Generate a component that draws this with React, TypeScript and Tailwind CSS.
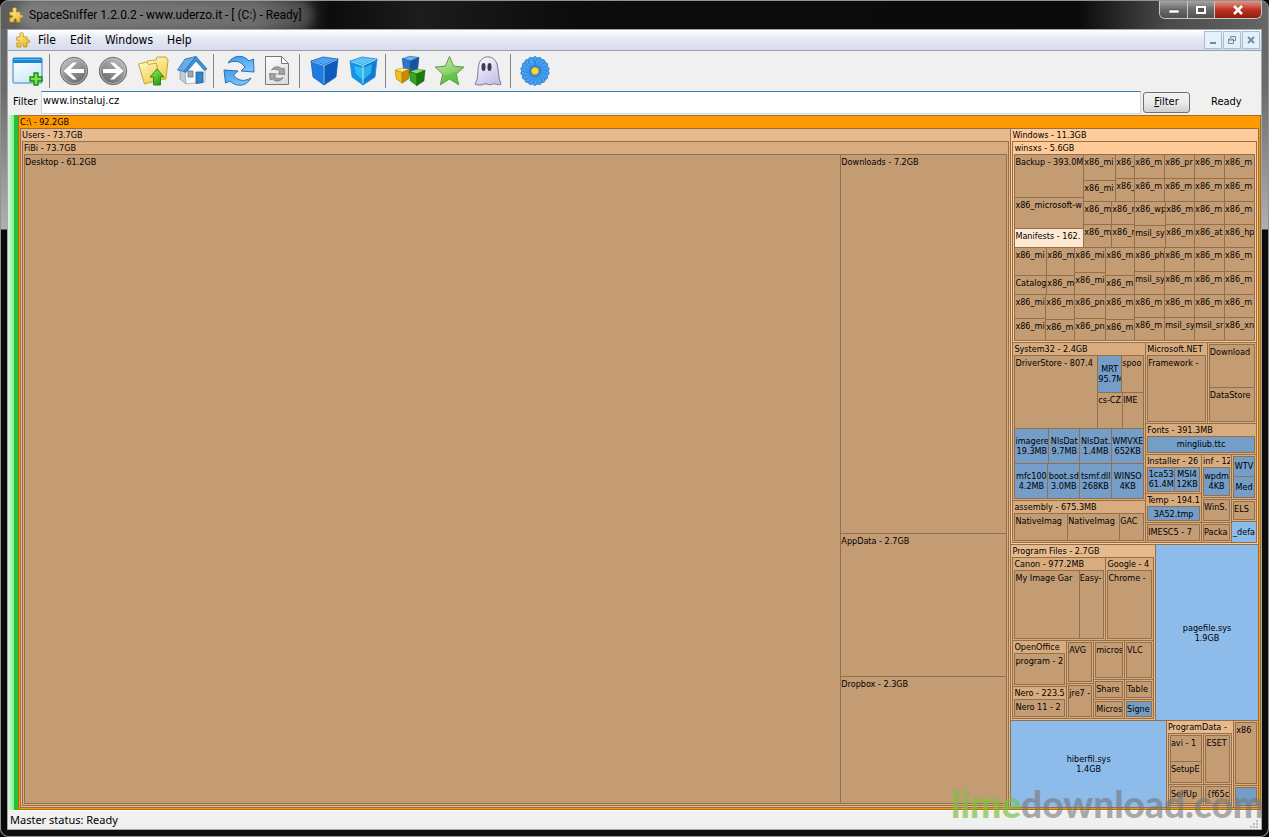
import type { ReactNode } from 'react';
import clsx from 'clsx';

/* ---------- treemap data ---------- */

type Tile =
  | { kind: 'row' | 'col'; weight: number; items: Tile[] }
  | { kind: 'folder'; weight: number; name?: string; tone: string; body: Tile }
  | { kind: 'leaf'; weight: number; name: string; tone: string }
  | { kind: 'file'; weight: number; name: string; size?: string; tone: string };

const TAN = 'bg-[#c49c74]';
const SAND = 'bg-[#d8ac7e]';
const PEACH = 'bg-[#e7ba8e]';
const LIGHT = 'bg-[#ffcc99]';
const CREAM = 'bg-[#ffe8d2]';
const BLUE = 'bg-[#749dc7]';
const SKY = 'bg-[#8dbbea]';

const row = (weight: number, ...items: Tile[]): Tile => ({ kind: 'row', weight, items });
const col = (weight: number, ...items: Tile[]): Tile => ({ kind: 'col', weight, items });
const leaf = (weight: number, name: string, tone = TAN): Tile => ({ kind: 'leaf', weight, name, tone });
const file = (weight: number, name: string, size?: string, tone = BLUE): Tile => ({ kind: 'file', weight, name, size, tone });
const folder = (weight: number, name: string, tone: string, body: Tile): Tile => ({ kind: 'folder', weight, name, tone, body });
const ring = (weight: number, body: Tile, tone = SAND): Tile => ({ kind: 'folder', weight, tone, body });
const small = (weight: number, name: string) => ring(weight, leaf(1, name));
const pair = (weight: number, a: string, b: string, top = 23, bottom = 22) => col(weight, leaf(top, a), leaf(bottom, b));

const winsxs = folder(
  199,
  'winsxs - 5.6GB',
  LIGHT,
  col(
    1,
    row(
      92,
      col(68, leaf(42, 'Backup - 393.0M'), leaf(30, 'x86_microsoft-w'), leaf(18, 'Manifests - 162.', CREAM)),
      col(
        170,
        row(
          46,
          pair(31, 'x86_mi', 'x86_mi', 25, 20),
          pair(18, 'x86_', 'x86_'),
          pair(29, 'x86_m', 'x86_m'),
          pair(29, 'x86_pr', 'x86_m'),
          pair(29, 'x86_m', 'x86_m'),
          pair(29, 'x86_m', 'x86_m'),
        ),
        row(
          45,
          pair(27, 'x86_m', 'x86_m', 22, 22),
          pair(22, 'x86_m', 'x86_m', 22, 22),
          pair(30, 'x86_wp', 'msil_sy', 23, 21),
          pair(28, 'x86_m', 'x86_m', 22, 22),
          pair(29, 'x86_m', 'x86_at', 22, 22),
          pair(29, 'x86_m', 'x86_hp', 22, 22),
        ),
      ),
    ),
    row(
      46,
      pair(31, 'x86_mi', 'Catalog', 27, 18),
      pair(27, 'x86_m', 'x86_m', 27, 18),
      pair(30, 'x86_mi', 'x86_mi', 24, 21),
      pair(28, 'x86_m', 'x86_m', 27, 18),
      pair(29, 'x86_ph', 'msil_sy'),
      pair(29, 'x86_m', 'x86_m'),
      pair(29, 'x86_m', 'x86_m'),
      pair(29, 'x86_m', 'x86_m'),
    ),
    row(
      45,
      pair(30, 'x86_mi', 'x86_mi', 23, 21),
      pair(28, 'x86_m', 'x86_m', 24, 20),
      pair(30, 'x86_pn', 'x86_pn', 23, 21),
      pair(28, 'x86_m', 'x86_m', 24, 20),
      pair(29, 'x86_m', 'x86_m', 22, 22),
      pair(29, 'x86_m', 'msil_sy', 22, 22),
      pair(29, 'x86_m', 'msil_sr', 22, 22),
      pair(29, 'x86_m', 'x86_xn', 22, 22),
    ),
  ),
);

const system32 = folder(
  157,
  'System32 - 2.4GB',
  SAND,
  col(
    1,
    row(
      72,
      leaf(82, 'DriverStore - 807.4'),
      col(45, row(36, file(23, 'MRT', '95.7M'), leaf(21, 'spoo')), row(35, leaf(24, 'cs-CZ'), leaf(20, 'IME'))),
    ),
    row(34, file(33, 'imagere', '19.3MB'), file(30, 'NlsDat', '9.7MB'), file(31, 'NlsDat.', '1.4MB'), file(31, 'WMVXE', '652KB')),
    row(34, file(32, 'mfc100', '4.2MB'), file(31, 'boot.sd', '3.0MB'), file(31, 'tsmf.dll', '268KB'), file(31, 'WINSO', '4KB')),
  ),
);

const windows = folder(
  415,
  'Windows - 11.3GB',
  LIGHT,
  col(
    1,
    winsxs,
    row(
      199,
      col(132, system32, folder(41, 'assembly - 675.3MB', SAND, row(1, leaf(52, 'NativeImag'), leaf(51, 'NativeImag'), leaf(23, 'GAC')))),
      col(
        110,
        row(80, folder(61, 'Microsoft.NET', SAND, leaf(1, 'Framework - ')), ring(48, col(1, leaf(42, 'Download'), leaf(33, 'DataStore')))),
        folder(29, 'Fonts - 391.3MB', SAND, file(1, 'mingliub.ttc')),
        row(
          88,
          col(
            55,
            folder(39, 'Installer - 26', SAND, row(1, file(26, '1ca53', '61.4M'), file(24, 'MSI4', '12KB'))),
            folder(29, 'Temp - 194.1', SAND, file(1, '3A52.tmp')),
            small(18, 'IMESC5 - 7'),
          ),
          col(29, folder(44, 'inf - 12', SAND, file(1, 'wpdm', '4KB')), small(23, 'WinS.'), small(19, 'Packa')),
          col(24, ring(44, col(1, file(20, 'WTV'), file(20, 'Med'))), small(21, 'ELS'), file(21, '_defa', undefined, SKY)),
        ),
      ),
    ),
  ),
);

const programFiles = folder(
  143,
  'Program Files - 2.7GB',
  PEACH,
  col(
    1,
    row(
      82,
      folder(93, 'Canon - 977.2MB', SAND, row(1, leaf(64, 'My Image Gar'), leaf(24, 'Easy-'))),
      folder(46, 'Google - 4', SAND, leaf(1, 'Chrome - ')),
    ),
    row(
      77,
      col(53, folder(45, 'OpenOffice', SAND, leaf(1, 'program - 2')), folder(31, 'Nero - 223.5', SAND, leaf(1, 'Nero 11 - 2'))),
      col(26, small(42, 'AVG'), small(34, 'jre7 - ')),
      col(30, small(39, 'micros'), small(18, 'Share'), small(18, 'Micros')),
      col(28, small(39, 'VLC'), small(18, 'Table'), ring(18, leaf(1, 'Signe', BLUE))),
    ),
  ),
);

const programData = folder(
  65,
  'ProgramData - ',
  PEACH,
  col(
    1,
    row(50, ring(34, col(1, leaf(25, 'avi - 1'), leaf(20, 'SetupE'))), small(26, 'ESET')),
    row(20, small(34, 'SelfUp'), small(26, '{f65c')),
  ),
);

const drive = folder(
  1,
  'C:\\ - 92.2GB',
  'bg-[#ff9900]',
  row(
    1,
    folder(
      989,
      'Users - 73.7GB',
      PEACH,
      folder(
        1,
        'FiBi - 73.7GB',
        SAND,
        row(
          1,
          leaf(815, 'Desktop - 61.2GB'),
          col(165, leaf(379, 'Downloads - 7.2GB'), leaf(141, 'AppData - 2.7GB'), leaf(126, 'Dropbox - 2.3GB')),
        ),
      ),
    ),
    col(
      247,
      windows,
      row(175, programFiles, file(103, 'pagefile.sys', '1.9GB', SKY)),
      row(86, file(156, 'hiberfil.sys', '1.4GB', SKY), programData, col(24, small(65, 'x86'), ring(20, file(1, '')))),
    ),
  ),
);

function TileView({ tile }: { tile: Tile }) {
  const grow = { flexGrow: tile.weight };
  const base = 'min-h-0 min-w-0 basis-0 overflow-hidden';

  if (tile.kind === 'row' || tile.kind === 'col') {
    return (
      <div className={clsx(base, 'flex gap-px', tile.kind === 'col' && 'flex-col')} style={grow}>
        {tile.items.map((item, index) => (
          <TileView key={index} tile={item} />
        ))}
      </div>
    );
  }
  if (tile.kind === 'folder') {
    return (
      <div className={clsx(base, 'flex flex-col px-px pb-px', !tile.name && 'pt-px', tile.tone)} style={grow}>
        {tile.name && <div className="h-3 shrink-0 overflow-hidden whitespace-pre">{tile.name}</div>}
        <div className="flex min-h-0 grow basis-0 bg-[#94704a] p-px">
          <TileView tile={tile.body} />
        </div>
      </div>
    );
  }
  if (tile.kind === 'file') {
    return (
      <div className={clsx(base, 'flex flex-col justify-center text-center leading-[10px] whitespace-pre', tile.tone)} style={grow}>
        <div className="overflow-hidden">{tile.name}</div>
        {tile.size && <div className="overflow-hidden">{tile.size}</div>}
      </div>
    );
  }
  return (
    <div className={clsx(base, 'pt-px whitespace-pre', tile.tone)} style={grow}>
      {tile.name}
    </div>
  );
}

/* ---------- icons ---------- */

function Icon({ children }: { children: ReactNode }) {
  return (
    <svg width="32" height="32" viewBox="0 0 32 32" aria-hidden="true">
      {children}
    </svg>
  );
}

function Gradients() {
  const stops: [string, string, string][] = [
    ['gArrows', '#3f9bea', '#7cc3fa'],
    ['gGray', '#c9c9c9', '#6d6d6d'],
    ['gYellow', '#fff6a0', '#e9b91e'],
    ['gFolder', '#fffad0', '#f3cf4a'],
    ['gGreen', '#a5ee58', '#2c9c14'],
    ['gGhost', '#ffffff', '#c5c2e6'],
    ['gStar', '#c8efac', '#6cbf4c'],
    ['gPage', '#ffffff', '#dcdcdc'],
    ['gWin', '#ffffff', '#cde9f8'],
  ];
  return (
    <svg width="0" height="0" className="absolute" aria-hidden="true">
      <defs>
        {stops.map(([id, from, to]) => (
          <linearGradient key={id} id={id} x1="0" y1="0" x2="0.6" y2="1">
            <stop offset="0" stopColor={from} />
            <stop offset="1" stopColor={to} />
          </linearGradient>
        ))}
      </defs>
    </svg>
  );
}

function PuzzleIcon() {
  return (
    <svg width="16" height="16" viewBox="0 0 16 16" aria-hidden="true">
      <path
        d="M5 5V3.200C4 1.800 5 .7 6.500.7S9 1.800 8.200 3.200V5H12v3h1.600c1.500 0 1.700 2.600 0 2.600H12V15H8.600v-2.200c0-1.500-2.600-1.500-2.600 0V15H1.800v-4.200h1.600c1.600-.3 1.600-2.300 0-2.500H1.800V5z"
        fill="url(#gYellow)"
        stroke="#c08a10"
        strokeWidth=".8"
      />
    </svg>
  );
}

const NewViewIcon = () => (
  <Icon>
    <rect x="1" y="3" width="29" height="25" rx="1" fill="url(#gWin)" stroke="#2f86c4" />
    <path d="M1 3h29v5H1z" fill="#1686d8" />
    <path d="M2 4h27v1H2z" fill="#62b7f2" />
    <path d="M22 18h4v4h4v4h-4v4h-4v-4h-4v-4h4z" fill="#7be34a" stroke="#168a12" strokeWidth="1.300" />
  </Icon>
);

const ArrowIcon = ({ flip }: { flip?: boolean }) => (
  <Icon>
    <g transform={flip ? 'matrix(-1 0 0 1 31 0)' : 'translate(-1 0)'}>
      <circle cx="16" cy="16" r="13.700" fill="url(#gGray)" stroke="#707070" />
      <circle cx="16" cy="16" r="12.500" fill="none" stroke="#bdbdbd" strokeWidth=".8" />
      <path d="M5.500 16L15 7.500h4L12.500 14H26v4H12.500l6.500 6.500h-4z" fill="#fff" />
    </g>
  </Icon>
);

const FolderUpIcon = () => (
  <Icon>
    <path d="M10 6l9-1 1-3h9l2 3-2 19-15 2z" fill="url(#gFolder)" stroke="#cba534" />
    <path d="M1.500 9l8-2 2 2.500 8-1.500 3 17-15 4z" fill="url(#gFolder)" stroke="#cba534" />
    <path d="M20 14l7 8h-3.500v8h-7v-8H13z" fill="url(#gGreen)" stroke="#2b8c15" />
  </Icon>
);

const HomeIcon = () => (
  <Icon>
    <path d="M4 14l6 2v13l-6-5z" fill="#c3cdd8" stroke="#8c9cac" strokeWidth=".8" />
    <path d="M9 15l11-10 9 10v12l-19 2z" fill="#f6f8fa" stroke="#9aa9b8" strokeWidth=".8" />
    <path d="M20 17h7v10.500l-7 1z" fill="#3784cc" stroke="#1a5b9c" strokeWidth=".8" />
    <path d="M12 16h5v6h-5z" fill="#9aaabb" stroke="#62768a" strokeWidth=".8" />
    <path d="M1.500 15L9 4l11-2.500L8 16.500z" fill="#64ade8" stroke="#2a6fb0" strokeWidth=".8" />
    <path d="M8 16.500L20 1.500l11 12.500-2.500 1.500L20 6 10 17.500z" fill="#3f8fd4" stroke="#2a6fb0" strokeWidth=".8" />
  </Icon>
);

const RefreshShape = ({ fill, stroke }: { fill: string; stroke: string }) => (
  <g fill={fill} stroke={stroke} strokeLinejoin="round">
    <path d="M5 8C10 0 20-1 26 6l4.500-2 .5 13-13-1 4-4C18 6 11 5 5 8z" />
    <path d="M28 23c-5 9-15 9-21 3l-4.500 2L1 15l14 1-4.500 4c4 6 11 7 17.500 3z" />
  </g>
);

const RefreshIcon = () => (
  <Icon>
    <RefreshShape fill="url(#gArrows)" stroke="#2370b8" />
  </Icon>
);

const PageIcon = () => (
  <Icon>
    <path d="M3.500 1.500h16l7 7v21h-23z" fill="url(#gPage)" stroke="#777" />
    <path d="M19.500 1.500v7h7z" fill="#fff" stroke="#777" />
    <g transform="translate(7 11) scale(.5)">
      <RefreshShape fill="#a5a5a5" stroke="#4b4b4b" />
    </g>
  </Icon>
);

type CubeProps = { top: string; left: string; right: string; edge: string };
const Cube = ({ top, left, right, edge }: CubeProps) => (
  <g stroke={edge} strokeWidth=".8" strokeLinejoin="round">
    <path d="M2 6l12-4 15 2-14 6z" fill={top} />
    <path d="M2 6l13 4v20L4 22z" fill={left} />
    <path d="M29 4L15 10v20l12-8z" fill={right} />
  </g>
);

const CubeIcon = ({ bright }: { bright?: boolean }) => (
  <Icon>
    {bright ? (
      <>
        <Cube top="#5bc5fa" left="#1495e8" right="#107cd8" edge="#2b83cf" />
        <path d="M6 11l9 2 9-4-1 9-8 7-7-6z" fill="#51e3f7" opacity=".5" />
        <path d="M3 6.500l12 4 13-6M15 10.500v18" stroke="#a3efff" strokeWidth="1" fill="none" />
      </>
    ) : (
      <>
        <Cube top="#4aa2f2" left="#1d7ce0" right="#0d5cbc" edge="#1c62b4" />
        <path d="M3 6.500l12 4 13-6M15 10.500v18" stroke="#83c2f8" strokeWidth="1" fill="none" />
      </>
    )}
  </Icon>
);

const BlocksIcon = () => (
  <Icon>
    <g transform="translate(6 0) scale(.62)">
      <Cube top="#6cb3f5" left="#2a78d6" right="#1754a4" edge="#123f80" />
    </g>
    <g transform="translate(-1 12) scale(.54)">
      <Cube top="#ffe980" left="#f4bd1c" right="#c88a06" edge="#8c6208" />
    </g>
    <g transform="translate(13 13) scale(.59)">
      <Cube top="#8ade68" left="#38a624" right="#1c7a10" edge="#125c0c" />
    </g>
  </Icon>
);

const StarIcon = () => (
  <Icon>
    <path
      d="M15.500 1.500l4.200 9.600 10.300 1-7.800 6.900 2.500 10.800L15.500 24l-9.200 5.800L8.800 19 1 12.100l10.300-1z"
      fill="url(#gStar)"
      stroke="#5c9a48"
      strokeLinejoin="round"
    />
    <path d="M9 20c6 0 10-3 13.500-3l2 12-9-5-8 5z" fill="#4dbb3a" opacity=".5" />
  </Icon>
);

const GhostIcon = () => (
  <Icon>
    <path
      d="M2 29C6 23 4 16 6 9c2-9 15-10 18 0 2 7 1 14 4 20-3 2-6-1-8 0s-4 1-6 0-4 1-6 1-4 0-6-1z"
      fill="url(#gGhost)"
      stroke="#77759a"
    />
    <ellipse cx="10.500" cy="12" rx="2" ry="4" fill="#3c3a52" />
    <ellipse cx="16.500" cy="12" rx="2" ry="4" fill="#3c3a52" />
  </Icon>
);

const petals = Array.from({ length: 18 }, (_, i) => i * 20);
const FlowerIcon = () => (
  <Icon>
    {petals.map((angle) => (
      <ellipse key={angle} cx="15" cy="6.500" rx="2.700" ry="5" fill="#45a2f0" stroke="#1f6fc0" strokeWidth=".6" transform={`rotate(${angle} 15 16)`} />
    ))}
    <circle cx="15" cy="16" r="6" fill="#2f83d6" />
    <circle cx="15" cy="16" r="3.500" fill="#ffd83a" stroke="#e6ac14" />
  </Icon>
);

/* ---------- chrome ---------- */

const toolGroups: { label: string; icon: ReactNode }[][] = [
  [{ label: 'New view', icon: <NewViewIcon /> }],
  [
    { label: 'Back', icon: <ArrowIcon /> },
    { label: 'Forward', icon: <ArrowIcon flip /> },
    { label: 'Up one level', icon: <FolderUpIcon /> },
    { label: 'Home', icon: <HomeIcon /> },
  ],
  [
    { label: 'Rescan', icon: <RefreshIcon /> },
    { label: 'Refresh page', icon: <PageIcon /> },
  ],
  [
    { label: 'Less detail', icon: <CubeIcon /> },
    { label: 'More detail', icon: <CubeIcon bright /> },
  ],
  [
    { label: 'File classes', icon: <BlocksIcon /> },
    { label: 'Tags', icon: <StarIcon /> },
    { label: 'Free space', icon: <GhostIcon /> },
  ],
  [{ label: 'Configure', icon: <FlowerIcon /> }],
];

const menus = ['File', 'Edit', 'Windows', 'Help'];

const caption = 'flex items-center justify-center border-r border-[#c8c8c8] bg-linear-to-b from-[#a4a4a4] via-[#6a6a6a] via-50% to-[#505050]';
const mdiButton = 'flex h-[18px] w-[18px] items-center justify-center border border-[#a5bed3] bg-[#e4f1fa]';

function TitleBar() {
  return (
    <header className="flex h-[28px] items-start justify-between pl-px">
      <div className="flex h-[28px] items-center gap-px">
        <PuzzleIcon />
        <h1 className="rounded-full bg-white/20 px-1 font-['Roboto',sans-serif] text-[12px] leading-4 whitespace-pre text-black shadow-[0_0_10px_8px_rgba(255,255,255,0.2)]">
          SpaceSniffer 1.2.0.2 - www.uderzo.it - [ (C:) - Ready]
        </h1>
      </div>
      <div className="flex h-[18px] overflow-hidden rounded-b-md border border-t-0 border-[#c8c8c8]">
        <button aria-label="Minimize" className={clsx(caption, 'w-7')}>
          <svg width="12" height="10" viewBox="0 0 12 10"><path d="M1 5h10v3H1z" fill="#fff" stroke="#444" strokeWidth=".5" /></svg>
        </button>
        <button aria-label="Maximize" className={clsx(caption, 'w-[27px]')}>
          <svg width="12" height="10" viewBox="0 0 12 10"><path d="M2 2h8v6H2z" fill="#555" stroke="#fff" strokeWidth="2" /></svg>
        </button>
        <button aria-label="Close" className="flex w-[46px] items-center justify-center bg-linear-to-b from-[#e0958a] via-[#c03324] via-50% to-[#8e1c10]">
          <svg width="12" height="10" viewBox="0 0 12 10"><path d="M2 1l8 8M10 1L2 9" stroke="#fff" strokeWidth="2.500" /></svg>
        </button>
      </div>
    </header>
  );
}

function MenuBar() {
  return (
    <nav className="flex h-[21px] items-center justify-between border-b border-[#9a9fa8] bg-linear-to-b from-white via-[#e6eaf4] via-40% to-[#d5dbec] pr-px pl-[7px]">
      <div className="flex items-center">
        <PuzzleIcon />
        {menus.map((item) => (
          <button key={item} className="px-[7px] text-[12px] leading-4">{item}</button>
        ))}
      </div>
      <div className="flex gap-px text-[#6d8aa0]">
        <button aria-label="Minimize view" className={mdiButton}>
          <svg width="10" height="10" viewBox="0 0 10 10"><path d="M2 8h6" stroke="currentColor" strokeWidth="2" /></svg>
        </button>
        <button aria-label="Restore view" className={mdiButton}>
          <svg width="10" height="10" viewBox="0 0 10 10"><path d="M3.500 3V1.500h5v4H7M1.500 4h5v4.500h-5zM1.500 5h5" fill="none" stroke="currentColor" /></svg>
        </button>
        <button aria-label="Close view" className={mdiButton}>
          <svg width="10" height="10" viewBox="0 0 10 10"><path d="M2 2l6 6M8 2L2 8" stroke="currentColor" strokeWidth="1.800" /></svg>
        </button>
      </div>
    </nav>
  );
}

function Toolbar() {
  return (
    <div className="flex h-[39px] items-center">
      {toolGroups.map((group, index) => (
        <div key={index} className="flex items-center">
          {index > 0 && <span className="mr-[5px] ml-[2px] h-[34px] w-px bg-[#858585]" />}
          {group.map((tool) => (
            <button key={tool.label} aria-label={tool.label} className="flex w-[39px] justify-center">
              {tool.icon}
            </button>
          ))}
        </div>
      ))}
    </div>
  );
}

function FilterBar() {
  return (
    <form className="flex h-[25px] items-center pb-px pl-[5px] text-[11px]" onSubmit={(event) => event.preventDefault()}>
      <label htmlFor="filter" className="w-7">Filter</label>
      <input
        id="filter"
        defaultValue="www.instaluj.cz"
        className="h-[23px] min-w-0 grow border border-[#c5daea] border-t-[#3d7bad] bg-white px-px pb-1 outline-none"
      />
      <button className="ml-[2px] h-[21px] w-[47px] rounded-[3px] border border-[#707070] bg-linear-to-b from-[#f2f2f2] via-[#ebebeb] via-50% to-[#cfcfcf]">
        <u>F</u>ilter
      </button>
      <output className="w-[71px] pl-[21px]">Ready</output>
    </form>
  );
}

export default function App() {
  return (
    <div className="flex min-h-screen bg-black font-['DejaVu_Sans_Condensed','DejaVu_Sans',sans-serif] text-black">
      <Gradients />
      <div className="relative flex grow flex-col rounded-lg border border-[#8e9494] bg-[linear-gradient(90deg,#5e5e5e_0,#4a4a4a_20%,#0c0c0c_26%,#1c1c1c_33%,#0c0c0c_45%,#0a0a0a_85%,#4a4a4a_92%,#666_100%)] px-1.5 pb-1.5">
        <div className="absolute inset-x-0 top-[28px] bottom-0 rounded-b-lg bg-[linear-gradient(180deg,#666_0,#6c6c6c_60px,#b0b0b0_200px,#0c0c0c_201px,#0c0c0c_100%)]" />
        <TitleBar />
        <main className="relative flex grow flex-col border border-[#a4a8a8] bg-[#f0f0f0]">
          <MenuBar />
          <Toolbar />
          <FilterBar />
          <div className="flex grow bg-[#efefef]">
            <div className="flex w-[10px] bg-linear-to-r from-[#dff5df] via-[#8df09a] via-50% to-[#8df09a]">
              <span className="ml-auto w-1 bg-[#22c13c]" />
            </div>
            <section aria-label="Disk usage" className="flex grow border border-[#a46c1c] text-[9px] leading-3">
              <TileView tile={drive} />
            </section>
          </div>
          <footer className="flex h-[19px] items-center border-t border-white px-[2px] font-['Noto_Sans',sans-serif] text-[11px] leading-4">
            Master status: Ready
            <span className="ml-auto self-end">
              <svg width="10" height="10" viewBox="0 0 10 10" aria-hidden="true">
                <path d="M7 1h2v2H7zM4 4h2v2H4zM7 4h2v2H7zM1 7h2v2H1zM4 7h2v2H4zM7 7h2v2H7z" fill="#bdbdbd" />
              </svg>
            </span>
          </footer>
        </main>
        <div className="pointer-events-none absolute right-1 bottom-3 font-['Lato',sans-serif] text-[37px] leading-[40px] font-black text-[#777]/60">
          <span className="text-[#7cc142]/70">lime</span>download.com
        </div>
      </div>
    </div>
  );
}
